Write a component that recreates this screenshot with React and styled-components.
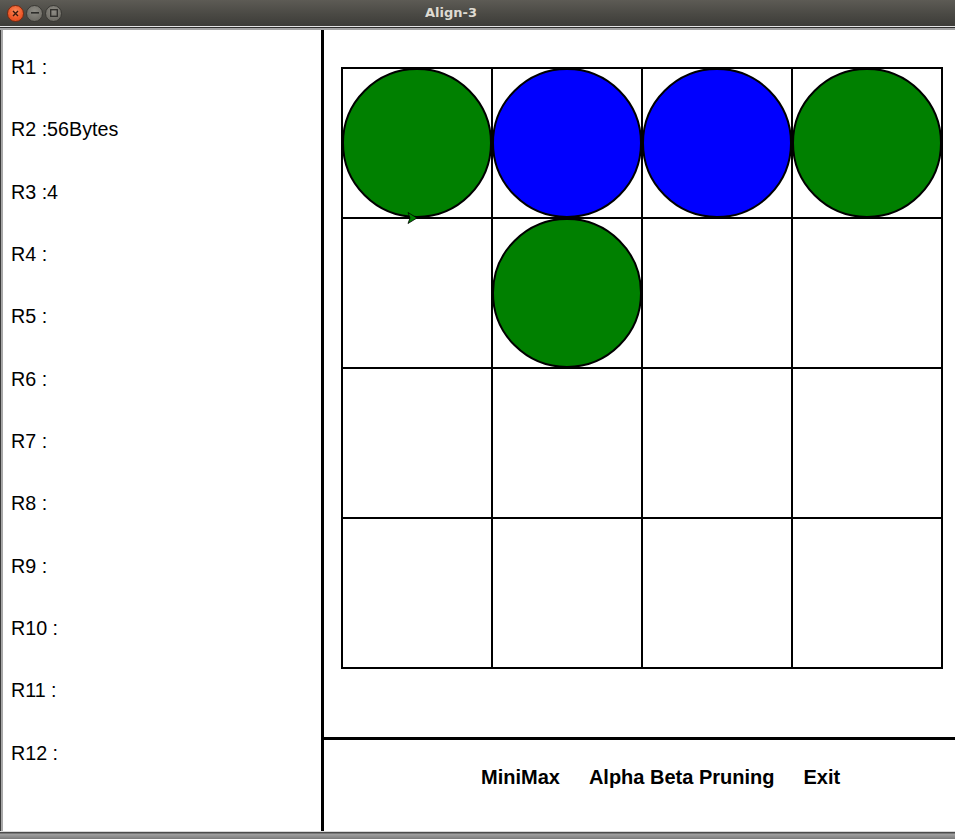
import React from "react";
import styled, { createGlobalStyle } from "styled-components";

const Global = createGlobalStyle`
  html, body { margin: 0; padding: 0; background: #ffffff; }
  body { font-family: "Liberation Sans", Arial, sans-serif; }
  * { box-sizing: border-box; }
`;

const Window = styled.div`
  width: 955px;
  height: 839px;
  display: flex;
  flex-direction: column;
  overflow: hidden;
  background: #ffffff;
`;

const TitleBar = styled.div`
  height: 26px;
  flex-shrink: 0;
  display: flex;
  align-items: center;
  padding-left: 7px;
  background: linear-gradient(to bottom, #5d5b55 0%, #4a4944 55%, #3d3c38 100%);
`;

const WinButtons = styled.div`
  display: flex;
  gap: 2px;
  align-items: center;
`;

const WinButton = styled.div`
  width: 17px;
  height: 17px;
  border-radius: 50%;
  display: flex;
  align-items: center;
  justify-content: center;
  border: 1px solid ${(p) => (p.$close ? "#7a2a10" : "#3a3935")};
  background: ${(p) =>
    p.$close
      ? "radial-gradient(circle at 50% 35%, #f98a5a 0%, #ef5a2a 55%, #d8461b 100%)"
      : "radial-gradient(circle at 50% 35%, #8e8c85 0%, #75736c 60%, #65635d 100%)"};
`;

const Title = styled.div`
  margin-left: 363px;
  font-family: "DejaVu Sans", "Liberation Sans", sans-serif;
  font-weight: bold;
  font-size: 13px;
  color: #dfdbd2;
  line-height: 26px;
`;

const TitleEdge = styled.div`
  height: 4px;
  flex-shrink: 0;
  border-top: 1px solid #e4e4e4;
  border-bottom: 2px solid #a3a3a3;
  background: #2f2f2f;
`;

const Content = styled.div`
  height: 801px;
  flex-shrink: 0;
  display: flex;
  border-left: 1px solid #3a3a3a;
  box-shadow: inset 2px 0 0 #a8a8a8;
  padding-left: 2px;
`;

const InfoPanel = styled.div`
  width: 321px;
  flex-shrink: 0;
  display: flex;
  flex-direction: column;
  padding: 6px 0 0 8px;
  border-right: 3px solid #000000;
`;

const InfoLabel = styled.div`
  height: 62.33px;
  line-height: 62.33px;
  font-family: "Liberation Sans", Arial, sans-serif;
  font-size: 19.7px;
  color: #000000;
  white-space: nowrap;
`;

const GamePanel = styled.div`
  flex: 1;
  display: flex;
  flex-direction: column;
`;

const BoardArea = styled.div`
  height: 710px;
  padding: 37px 0 0 17px;
  border-bottom: 3px solid #000000;
  flex-shrink: 0;
`;

const Board = styled.div`
  display: grid;
  grid-template-columns: repeat(4, 150px);
  grid-template-rows: repeat(4, 150px);
  width: 602px;
  border-left: 2px solid #000000;
  border-top: 2px solid #000000;
`;

const Cell = styled.div`
  position: relative;
  border-right: 2px solid #000000;
  border-bottom: 2px solid #000000;
  display: flex;
  align-items: center;
  justify-content: center;
  overflow: visible;
  z-index: ${(p) => (p.$filled ? 1 : 0)};
`;

const Piece = styled.div`
  width: 150px;
  height: 150px;
  flex-shrink: 0;
  border-radius: 50%;
  border: 2px solid #000000;
  background: ${(p) => (p.$color === "blue" ? "#0000ff" : "#008000")};
`;

const Marker = styled.svg`
  position: absolute;
  left: 64px;
  top: 143px;
  z-index: 2;
`;

const Controls = styled.div`
  flex: 1;
  display: flex;
  align-items: flex-start;
  padding: 26px 0 0 157px;
  gap: 29px;
`;

const ActionButton = styled.button`
  border: none;
  background: none;
  padding: 0;
  margin: 0;
  font-family: "Liberation Sans", Arial, sans-serif;
  font-weight: bold;
  font-size: 20px;
  line-height: 23px;
  color: #000000;
  cursor: pointer;
`;

const BottomEdge = styled.div`
  flex: 1;
  border-top: 1px solid #d8d8d8;
  background: linear-gradient(to bottom, #4c4c4c 0px, #4c4c4c 1px, #a2a2a2 2px, #7a7a7a 100%);
`;

const labels = [
  "R1 :",
  "R2 :56Bytes",
  "R3 :4",
  "R4 :",
  "R5 :",
  "R6 :",
  "R7 :",
  "R8 :",
  "R9 :",
  "R10 :",
  "R11 :",
  "R12 :",
];

const board = [
  ["green", "blue", "blue", "green"],
  [null, "green", null, null],
  [null, null, null, null],
  [null, null, null, null],
];

export default function App() {
  return (
    <>
      <Global />
      <Window>
        <TitleBar>
          <WinButtons>
            <WinButton $close>
              <svg width="7" height="7" viewBox="0 0 7 7">
                <path d="M1 1 L6 6 M6 1 L1 6" stroke="#3a1a0e" strokeWidth="1.4" />
              </svg>
            </WinButton>
            <WinButton>
              <svg width="8" height="2" viewBox="0 0 8 2">
                <rect x="0" y="0" width="8" height="1.6" fill="#2e2d2a" />
              </svg>
            </WinButton>
            <WinButton>
              <svg width="8" height="8" viewBox="0 0 8 8">
                <rect x="0.7" y="0.7" width="6.6" height="6.6" fill="none" stroke="#2e2d2a" strokeWidth="1.3" />
              </svg>
            </WinButton>
          </WinButtons>
          <Title>Align-3</Title>
        </TitleBar>
        <TitleEdge />
        <Content>
          <InfoPanel>
            {labels.map((l) => (
              <InfoLabel key={l}>{l}</InfoLabel>
            ))}
          </InfoPanel>
          <GamePanel>
            <BoardArea>
              <Board>
                {board.map((row, r) =>
                  row.map((c, ci) => (
                    <Cell key={`${r}-${ci}`} $filled={!!c}>
                      {c && <Piece $color={c} />}
                      {r === 0 && ci === 0 && (
                        <Marker width="11" height="12" viewBox="0 0 11 12">
                          <polygon points="1,0.5 10,6 1,11.5 3,6" fill="#008000" stroke="#000" strokeWidth="0.8" />
                        </Marker>
                      )}
                    </Cell>
                  ))
                )}
              </Board>
            </BoardArea>
            <Controls>
              <ActionButton>MiniMax</ActionButton>
              <ActionButton>Alpha Beta Pruning</ActionButton>
              <ActionButton>Exit</ActionButton>
            </Controls>
          </GamePanel>
        </Content>
        <BottomEdge />
      </Window>
    </>
  );
}
